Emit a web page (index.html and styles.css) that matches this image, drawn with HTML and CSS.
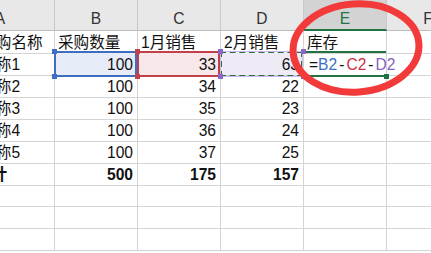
FILE: index.html
```html
<!doctype html>
<html>
<head>
  <meta charset="utf-8">
  <link rel="stylesheet" href="styles.css">
</head>
<body>
  <div id="sheet">
    <div class="row head">
      <div class="cell">A</div>
      <div class="cell">B</div>
      <div class="cell">C</div>
      <div class="cell">D</div>
      <div class="cell active-col">E</div>
      <div class="cell">F</div>
    </div>
    <div class="row">
      <div class="cell">商品采购名称</div>
      <div class="cell">采购数量</div>
      <div class="cell">1月销售</div>
      <div class="cell">2月销售</div>
      <div class="cell">库存</div>
      <div class="cell"></div>
    </div>
    <div class="row">
      <div class="cell">商品名称1</div>
      <div class="cell num ref ref-b">100<span class="frame"></span><i class="h tl"></i><i class="h tr"></i><i class="h bl"></i><i class="h br"></i></div>
      <div class="cell num ref ref-c">33<span class="frame"></span><i class="h tl"></i><i class="h tr"></i><i class="h bl"></i><i class="h br"></i></div>
      <div class="cell num ref ref-d">63<span class="frame"></span><i class="h tl"></i><i class="h tr"></i><i class="h bl"></i><i class="h br"></i></div>
      <div class="cell editing">=<span class="fb">B2</span><span class="op">-</span><span class="fc">C2</span><span class="op">-</span><span class="fd">D2</span><span class="frame"></span><i class="h br"></i></div>
      <div class="cell"></div>
    </div>
    <div class="row">
      <div class="cell">商品名称2</div>
      <div class="cell num">100</div>
      <div class="cell num">34</div>
      <div class="cell num">22</div>
      <div class="cell"></div>
      <div class="cell"></div>
    </div>
    <div class="row">
      <div class="cell">商品名称3</div>
      <div class="cell num">100</div>
      <div class="cell num">35</div>
      <div class="cell num">23</div>
      <div class="cell"></div>
      <div class="cell"></div>
    </div>
    <div class="row">
      <div class="cell">商品名称4</div>
      <div class="cell num">100</div>
      <div class="cell num">36</div>
      <div class="cell num">24</div>
      <div class="cell"></div>
      <div class="cell"></div>
    </div>
    <div class="row">
      <div class="cell">商品名称5</div>
      <div class="cell num">100</div>
      <div class="cell num">37</div>
      <div class="cell num">25</div>
      <div class="cell"></div>
      <div class="cell"></div>
    </div>
    <div class="row total">
      <div class="cell label">合计</div>
      <div class="cell num">500</div>
      <div class="cell num">175</div>
      <div class="cell num">157</div>
      <div class="cell"></div>
      <div class="cell"></div>
    </div>
    <div class="row"><div class="cell"></div><div class="cell"></div><div class="cell"></div><div class="cell"></div><div class="cell"></div><div class="cell"></div></div>
    <div class="row"><div class="cell"></div><div class="cell"></div><div class="cell"></div><div class="cell"></div><div class="cell"></div><div class="cell"></div></div>
    <div class="row"><div class="cell"></div><div class="cell"></div><div class="cell"></div><div class="cell"></div><div class="cell"></div><div class="cell"></div></div>
  </div>
  <svg class="mark" width="431" height="253" viewBox="0 0 431 253">
    <ellipse cx="356" cy="48" rx="63" ry="44" fill="none" stroke="#f23a3a" stroke-width="7" transform="rotate(-4 356 48)"/>
  </svg>
</body>
</html>
```

FILE: styles.css
```css
html, body {
  margin: 0;
  overflow: hidden;
}
body {
  position: relative;
  width: 431px;
  height: 253px;
  background: white;
  font-family: "Liberation Sans", "Noto Sans CJK SC", sans-serif;
  font-size: 15.6px;
  color: #111;
}
#sheet {
  margin-left: -54px;
}
.row {
  display: grid;
  grid-template-columns: 109px repeat(5, 83px);
  height: 22px;
}
.cell {
  position: relative;
  box-sizing: border-box;
  border-right: 1px solid #d4d4d4;
  border-bottom: 1px solid #d4d4d4;
  padding: 2px 3px 0 3px;
  line-height: 20px;
  white-space: nowrap;
  overflow: visible;
}
.num {
  text-align: right;
  padding-right: 4px;
}
.total .cell {
  font-weight: bold;
}
.total .label {
  padding-left: 30px;
}

/* column letters */
.head {
  height: 31px;
  background: #e8e8e8;
}
.head .cell {
  text-align: center;
  padding-top: 9px;
  color: #333;
  border-right-color: #c9c9c9;
  border-bottom-color: #bdbdbd;
}
.head .active-col {
  background: #d3d3d3;
  color: #217346;
  border-bottom: 2px solid #217346;
}

/* formula reference ranges */
.frame {
  position: absolute;
  top: -2px;
  left: -1px;
  right: 0;
  bottom: -2px;
  border: 2px solid;
}
.h {
  position: absolute;
  width: 5px;
  height: 5px;
  z-index: 2;
}
.h.tl { top: -4px; left: -3px; }
.h.tr { top: -4px; right: -3px; }
.h.bl { bottom: -4px; left: -3px; }
.h.br { bottom: -4px; right: -3px; }

.ref-b { background: #e6edf8; }
.ref-b .frame { border-color: #3c6fc2; }
.ref-b .h { background: #3c6fc2; }

.ref-c { background: #f9e8e9; }
.ref-c .frame { border-color: #c2404a; }
.ref-c .h { background: #c2404a; }

.ref-d { background: #eeebf6; }
.ref-d .frame {
  border: 2px dashed #2d6e45;
  outline: 1px solid #c9b9e6;
  outline-offset: -1px;
}
.ref-d .h { background: #8a66c6; }

/* cell being edited */
.editing {
  padding-left: 5px;
  z-index: 1;
}
.editing .frame {
  border-left: none;
  border-right: none;
  border-color: #217346;
  left: 0;
}
.editing .h {
  background: #217346;
  right: -3px;
  bottom: -4px;
}
.op { margin: 0 2px; }
.fb { color: #3c6fc2; }
.fc { color: #c8343f; }
.fd { color: #8a5fc4; }

.mark {
  position: absolute;
  left: 0;
  top: 0;
  pointer-events: none;
  z-index: 5;
}
```
